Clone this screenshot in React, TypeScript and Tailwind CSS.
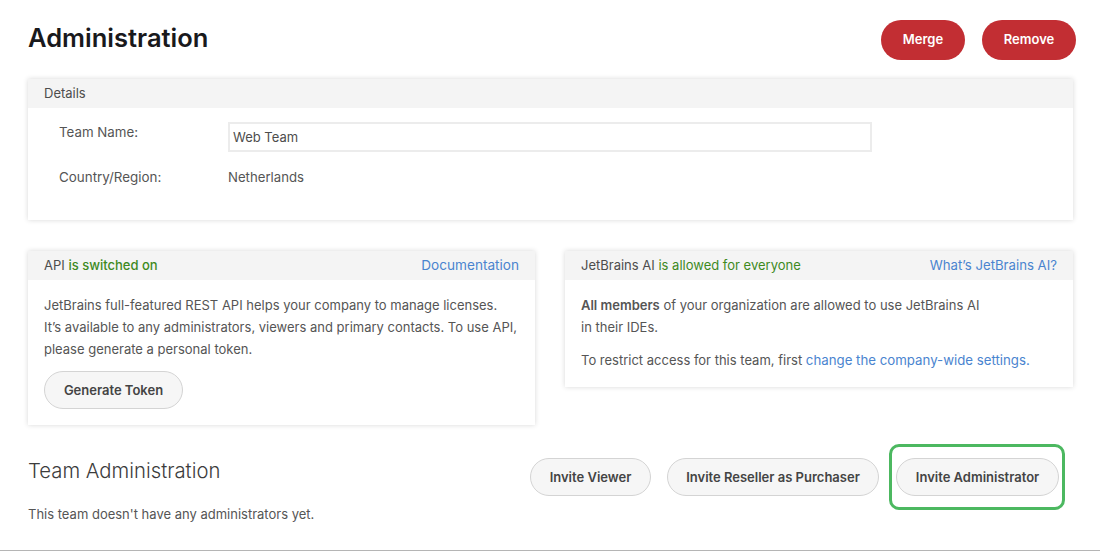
const font = "font-['Inter',sans-serif]";

function PillButton({ label, className = "" }: { label: string; className?: string }) {
  return (
    <button
      className={`relative flex h-[38px] items-center justify-center rounded-full border border-[#d4d4d4] bg-[#f6f6f6] text-[13px] font-semibold text-[#444444] ${className}`}
    >
      {label}
    </button>
  );
}

function RedButton({ label, className = "" }: { label: string; className?: string }) {
  return (
    <button
      className={`flex h-10 items-center justify-center rounded-[20px] bg-[#c22e33] text-[13px] font-semibold text-white ${className}`}
    >
      {label}
    </button>
  );
}

function CardHeader({ children }: { children: React.ReactNode }) {
  return (
    <div className="flex h-[29px] items-center justify-between bg-[#f4f4f4] px-4 text-[13px] text-[#4d4d4d]">
      {children}
    </div>
  );
}

export default function App() {
  return (
    <div className={`${font} flex h-[551px] w-[1100px] flex-col overflow-hidden border-b border-[#b5b5b5] bg-white pl-7 pr-6 pt-5`}>
      <div className="flex items-start justify-between">
        <h1 className="mt-px text-[25.5px] leading-[34px] font-semibold text-[#19191c]">Administration</h1>
        <div className="flex gap-[17px]">
          <RedButton label="Merge" className="w-[84px]" />
          <RedButton label="Remove" className="w-[94px]" />
        </div>
      </div>

      <section className="mt-[19px] h-[141px] w-[1045px] bg-white shadow-[0_0_5px_rgba(0,0,0,0.16)]">
        <CardHeader>Details</CardHeader>
        <div className="pl-[31px] pt-[14px] text-[13.2px] text-[#555555]">
          <div className="flex items-start">
            <span className="w-[169px] text-[13.3px] leading-[21px]">Team Name:</span>
            <input
              readOnly
              value="Web Team"
              className="h-[30px] w-[644px] border-2 border-[#ececec] px-[3px] text-[13px] text-[#4d4d4d] outline-none"
            />
          </div>
          <div className="mt-[14px] flex leading-[22px]">
            <span className="w-[169px] text-[13.4px]">Country/Region:</span>
            <span>Netherlands</span>
          </div>
        </div>
      </section>

      <div className="mt-[31px] flex items-start gap-[30px]">
        <section className="h-[174px] w-[507px] bg-white shadow-[0_0_5px_rgba(0,0,0,0.16)]">
          <CardHeader>
            <span>
              API <span className="font-medium text-[#3e8a1e]">is switched on</span>
            </span>
            <a className="text-[13.6px] text-[#4a84cf]">Documentation</a>
          </CardHeader>
          <div className="px-4 pt-[14px] text-[13px] leading-[22px] text-[#555555]">
            <p className="whitespace-nowrap">JetBrains full-featured REST API helps your company to manage licenses.</p>
            <p className="whitespace-nowrap">It’s available to any administrators, viewers and primary contacts. To use API,</p>
            <p>please generate a personal token.</p>
            <PillButton label="Generate Token" className="mt-[11px] w-[139px]" />
          </div>
        </section>

        <section className="h-[136px] w-[508px] bg-white shadow-[0_0_5px_rgba(0,0,0,0.16)]">
          <CardHeader>
            <span>
              JetBrains AI <span className="text-[#3e8a1e]">is allowed for everyone</span>
            </span>
            <a className="text-[13.2px] text-[#4a84cf]">What’s JetBrains AI?</a>
          </CardHeader>
          <div className="px-4 pt-[14px] text-[13px] leading-[22px] text-[#555555]">
            <p>
              <strong className="font-semibold">All members</strong> of your organization are allowed to use JetBrains AI
            </p>
            <p>in their IDEs.</p>
            <p className="mt-[11px] whitespace-nowrap">
              To restrict access for this team, first <a className="text-[13.25px] text-[#4a84cf]">change the company-wide settings.</a>
            </p>
          </div>
        </section>
      </div>

      <div className="relative mt-[33px] flex items-start justify-between pr-[17px]">
        <div>
          <h2 className="text-[20.3px] leading-[26px] font-light text-[#3c3c3c]">Team Administration</h2>
          <p className="mt-[19px] text-[13px] leading-[22px] text-[#555555]">This team doesn't have any administrators yet.</p>
        </div>
        <div className="flex">
          <PillButton label="Invite Viewer" className="w-[121px] pt-[2px]" />
          <PillButton label="Invite Reseller as Purchaser" className="ml-4 w-[212px] pt-[2px]" />
          <PillButton label="Invite Administrator" className="ml-[17px] w-[163px] pt-[2px]" />
          <span className="pointer-events-none absolute top-[-14px] right-[11px] h-[66px] w-[176px] rounded-[10px] border-[3px] border-[#4cb860]" />
        </div>
      </div>
    </div>
  );
}
